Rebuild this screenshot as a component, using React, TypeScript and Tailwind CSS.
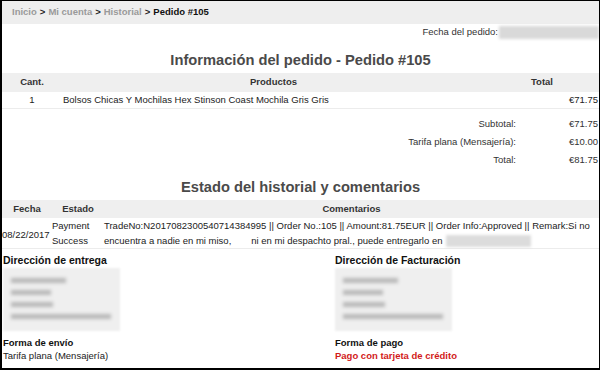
// Order detail page: breadcrumb, order lines, totals, history and addresses

const Blur = ({ className }: { className: string }) => (
  <div className={`blur-[1.5px] ${className}`} />
);

function AddressBox() {
  return (
    <div className="w-[117px] h-[63px] bg-[#efefef] blur-[1px] flex flex-col gap-[7px] pt-[10px] pl-[8px]">
      <Blur className="h-[5px] w-[55px] bg-[#b8b8b8]" />
      <Blur className="h-[5px] w-[40px] bg-[#b8b8b8]" />
      <Blur className="h-[5px] w-[42px] bg-[#b8b8b8]" />
      <Blur className="h-[5px] w-[100px] bg-[#b8b8b8]" />
    </div>
  );
}

export default function App() {
  return (
    <div className="w-[600px] h-[370px] bg-black pl-[2px] pt-[1px] pr-[1px] pb-[2px] font-['Liberation_Sans',Arial,sans-serif] text-[9.5px] text-[#222]">
      <div className="h-full bg-white overflow-hidden">
        {/* Breadcrumb */}
        <div className="h-[23px] bg-[#eeeeee] flex items-center pl-[10px] font-bold text-[9.5px]">
          <span className="text-[#9a9a9a]">Inicio</span>
          <span className="mx-[3px] text-[#222]">&gt;</span>
          <span className="text-[#9a9a9a]">Mi cuenta</span>
          <span className="mx-[3px] text-[#222]">&gt;</span>
          <span className="text-[#9a9a9a]">Historial</span>
          <span className="mx-[3px] text-[#222]">&gt;</span>
          <span className="text-[#111]">Pedido #105</span>
        </div>

        {/* Order date */}
        <div className="h-[17px] flex items-center justify-end">
          <span className="text-[#333]">Fecha del pedido:</span>
          <div className="w-[100px] h-[13px] ml-[1px] bg-[#d9d9d9] blur-[1.5px]" />
        </div>

        <h2 className="mt-[9px] h-[20px] flex items-center justify-center text-[14.7px] font-bold text-[#4a4a4a]">
          Información del pedido - Pedido #105
        </h2>

        {/* Products table */}
        <div className="mt-[3px]">
          <div className="grid grid-cols-[60px_1fr_114px] h-[19px] items-center bg-[#efefef] font-bold text-[#333]">
            <div className="text-center">Cant.</div>
            <div className="text-center">Productos</div>
            <div className="text-center">Total</div>
          </div>
          <div className="grid grid-cols-[60px_1fr_114px] h-[17px] items-center border-b border-[#ececec]">
            <div className="text-center">1</div>
            <div className="pl-[1px]">Bolsos Chicas Y Mochilas Hex Stinson Coast Mochila Gris Gris</div>
            <div className="text-right pr-[1px]">€71.75</div>
          </div>
        </div>

        {/* Totals */}
        <div className="mt-[6px] flex flex-col">
          {[
            ['Subtotal:', '€71.75'],
            ['Tarifa plana (Mensajería):', '€10.00'],
            ['Total:', '€81.75'],
          ].map(([label, value]) => (
            <div key={label} className="h-[18px] flex items-center justify-end text-[#333]">
              <span>{label}</span>
              <span className="w-[83px] text-right pr-[1px]">{value}</span>
            </div>
          ))}
        </div>

        <h2 className="mt-[8px] h-[20px] flex items-center justify-center text-[14.7px] font-bold text-[#4a4a4a]">
          Estado del historial y comentarios
        </h2>

        {/* History table */}
        <div className="mt-[3px]">
          <div className="grid grid-cols-[50px_52px_1fr] h-[18px] items-center bg-[#efefef] font-bold text-[#333]">
            <div className="text-center">Fecha</div>
            <div className="text-center">Estado</div>
            <div className="text-center">Comentarios</div>
          </div>
          <div className="grid grid-cols-[50px_52px_1fr] h-[31px] items-center border-b border-[#ececec] leading-[15px]">
            <div className="pt-[2px]">08/22/2017</div>
            <div>
              Payment
              <br />
              Success
            </div>
            <div>
              TradeNo:N2017082300540714384995 || Order No.:105 || Amount:81.75EUR || Order Info:Approved || Remark:Si no
              <br />
              encuentra a nadie en mi miso,
              <span className="inline-block w-[20px]" />
              ni en mi despachto pral., puede entregarlo en
              <span className="inline-block align-middle ml-[4px] w-[85px] h-[12px] bg-[#dcdcdc] blur-[1.5px]" />
            </div>
          </div>
        </div>

        {/* Addresses */}
        <div className="grid grid-cols-[332px_1fr] pl-[1px] mt-[5px]">
          <div>
            <div className="h-[14px] flex items-center text-[10.5px] font-bold text-[#111]">Dirección de entrega</div>
            <AddressBox />
            <div className="mt-[5px] h-[14px] flex items-center font-bold text-[#111]">Forma de envío</div>
            <div className="h-[13px] flex items-center">Tarifa plana (Mensajería)</div>
          </div>
          <div>
            <div className="h-[14px] flex items-center text-[10.5px] font-bold text-[#111]">Dirección de Facturación</div>
            <AddressBox />
            <div className="mt-[5px] h-[14px] flex items-center font-bold text-[#111]">Forma de pago</div>
            <div className="h-[13px] flex items-center font-bold text-[#d21a1a]">Pago con tarjeta de crédito</div>
          </div>
        </div>
      </div>
    </div>
  );
}
